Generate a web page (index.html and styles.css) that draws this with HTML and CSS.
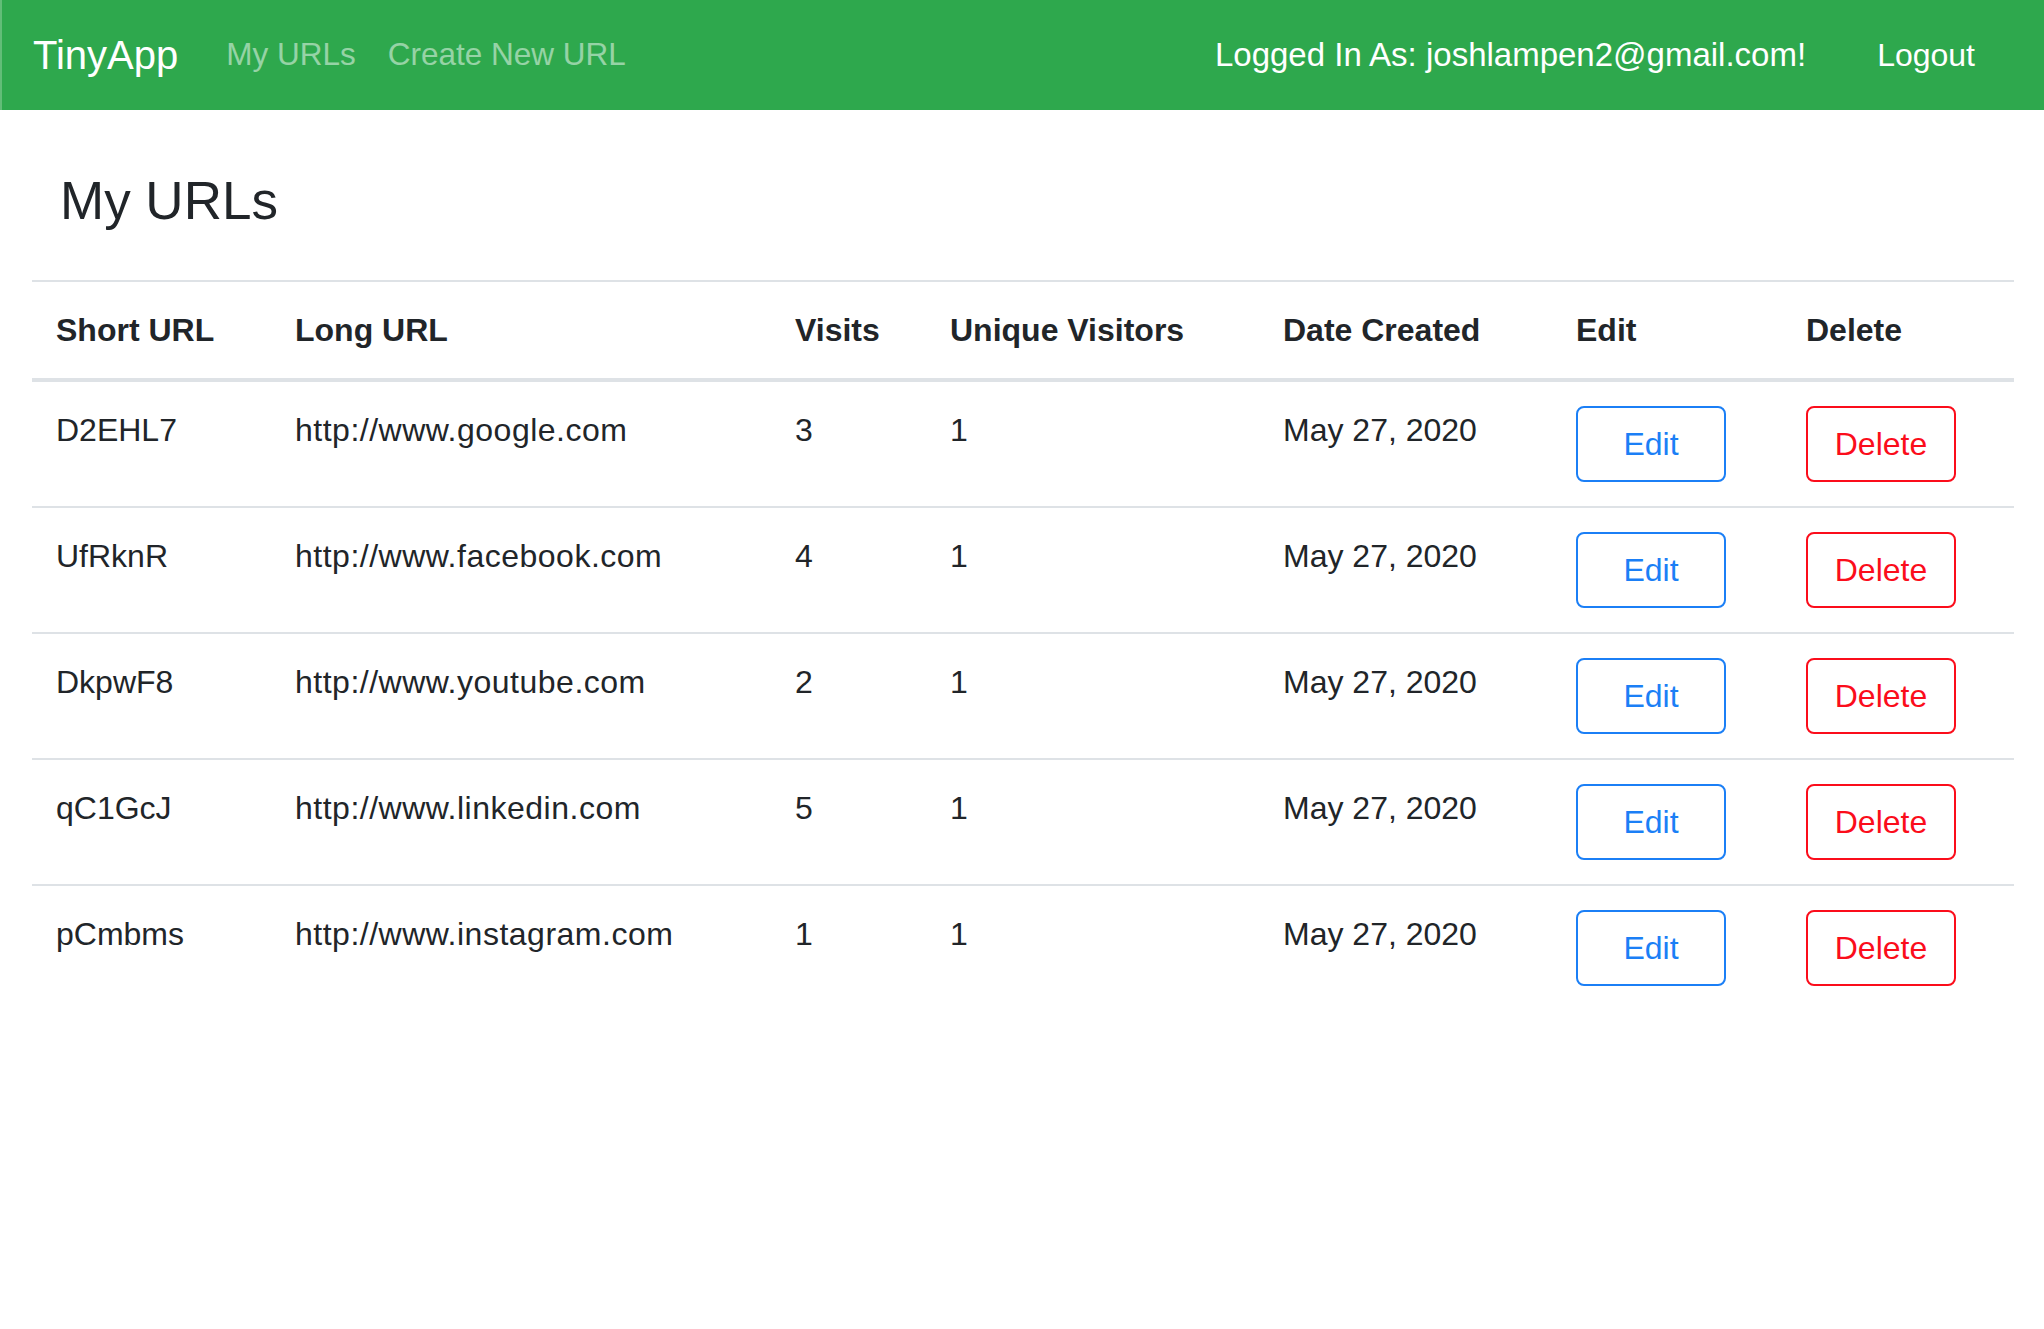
FILE: index.html
```html
<!DOCTYPE html>
<html lang="en">
<head>
<meta charset="utf-8">
<title>TinyApp - My URLs</title>
<link rel="stylesheet" href="styles.css">
</head>
<body>
<nav class="navbar">
  <a class="brand" href="#">TinyApp</a>
  <div class="nav-left">
    <a class="nav-link" href="#">My URLs</a>
    <a class="nav-link" href="#">Create New URL</a>
  </div>
  <div class="nav-right">
    <span class="user">Logged In As: joshlampen2@gmail.com!</span>
    <a class="logout" href="#">Logout</a>
  </div>
</nav>
<main class="main">
  <h3 class="title">My URLs</h3>
  <table class="table">
    <colgroup>
      <col class="c-short"><col class="c-long"><col class="c-visits"><col class="c-unique"><col class="c-date"><col class="c-edit"><col class="c-delete">
    </colgroup>
    <thead>
      <tr><th>Short URL</th><th>Long URL</th><th>Visits</th><th>Unique Visitors</th><th>Date Created</th><th>Edit</th><th>Delete</th></tr>
    </thead>
    <tbody>
      <tr><td>D2EHL7</td><td class="url">http://www.google.com</td><td>3</td><td>1</td><td>May 27, 2020</td><td><button class="btn btn-edit">Edit</button></td><td><button class="btn btn-delete">Delete</button></td></tr>
      <tr><td>UfRknR</td><td class="url">http://www.facebook.com</td><td>4</td><td>1</td><td>May 27, 2020</td><td><button class="btn btn-edit">Edit</button></td><td><button class="btn btn-delete">Delete</button></td></tr>
      <tr><td>DkpwF8</td><td class="url">http://www.youtube.com</td><td>2</td><td>1</td><td>May 27, 2020</td><td><button class="btn btn-edit">Edit</button></td><td><button class="btn btn-delete">Delete</button></td></tr>
      <tr><td>qC1GcJ</td><td class="url">http://www.linkedin.com</td><td>5</td><td>1</td><td>May 27, 2020</td><td><button class="btn btn-edit">Edit</button></td><td><button class="btn btn-delete">Delete</button></td></tr>
      <tr><td>pCmbms</td><td class="url">http://www.instagram.com</td><td>1</td><td>1</td><td>May 27, 2020</td><td><button class="btn btn-edit">Edit</button></td><td><button class="btn btn-delete">Delete</button></td></tr>
    </tbody>
  </table>
</main>
</body>
</html>
```
FILE: styles.css
```css
* { box-sizing: border-box; }

html, body {
  margin: 0;
  background: #ffffff;
}

body {
  font-family: "Liberation Sans", Arial, sans-serif;
  font-size: 32px;
  line-height: 1.5;
  color: #212529;
  min-height: 1329px;
}

a { text-decoration: none; }

.navbar {
  display: flex;
  align-items: center;
  height: 110px;
  background: #2ea84d;
  border-left: 2px solid #62bd78;
  padding: 0 69px 0 31px;
}

.brand {
  color: #ffffff;
  font-size: 40px;
  line-height: 60px;
  margin-right: 32px;
}

.nav-left {
  display: flex;
}

.nav-link {
  color: rgba(255, 255, 255, 0.5);
  padding: 0 16px;
  font-size: 31.5px;
}

.nav-right {
  display: flex;
  align-items: center;
  gap: 71px;
  margin-left: auto;
}

.user,
.logout {
  color: #ffffff;
}

.user {
  font-size: 33px;
}

.main {
  padding: 0 30px 0 32px;
}

.title {
  font-size: 53px;
  line-height: 67px;
  font-weight: 400;
  margin: 57px 0 46px;
  padding-left: 28px;
}

.table {
  width: 100%;
  border-collapse: collapse;
  table-layout: fixed;
}

.c-short { width: 239px; }
.c-long { width: 500px; }
.c-visits { width: 155px; }
.c-unique { width: 333px; }
.c-date { width: 293px; }
.c-edit { width: 230px; }
.c-delete { width: 232px; }

.table th,
.table td {
  text-align: left;
  vertical-align: top;
  padding: 24px;
  border-top: 2px solid #dee2e6;
  white-space: nowrap;
}

.table th {
  font-weight: 700;
  border-bottom: 4px solid #dee2e6;
}

.table td.url {
  letter-spacing: 0.5px;
}

.btn {
  display: inline-block;
  width: 150px;
  height: 76px;
  padding: 12px 0;
  font-family: inherit;
  font-size: 32px;
  line-height: 48px;
  text-align: center;
  background: #ffffff;
  border: 2px solid;
  border-radius: 8px;
  cursor: pointer;
}

.btn-edit {
  color: #1b7ff6;
  border-color: #1b7ff6;
}

.btn-delete {
  color: #fb0d1b;
  border-color: #fb0d1b;
}
```
